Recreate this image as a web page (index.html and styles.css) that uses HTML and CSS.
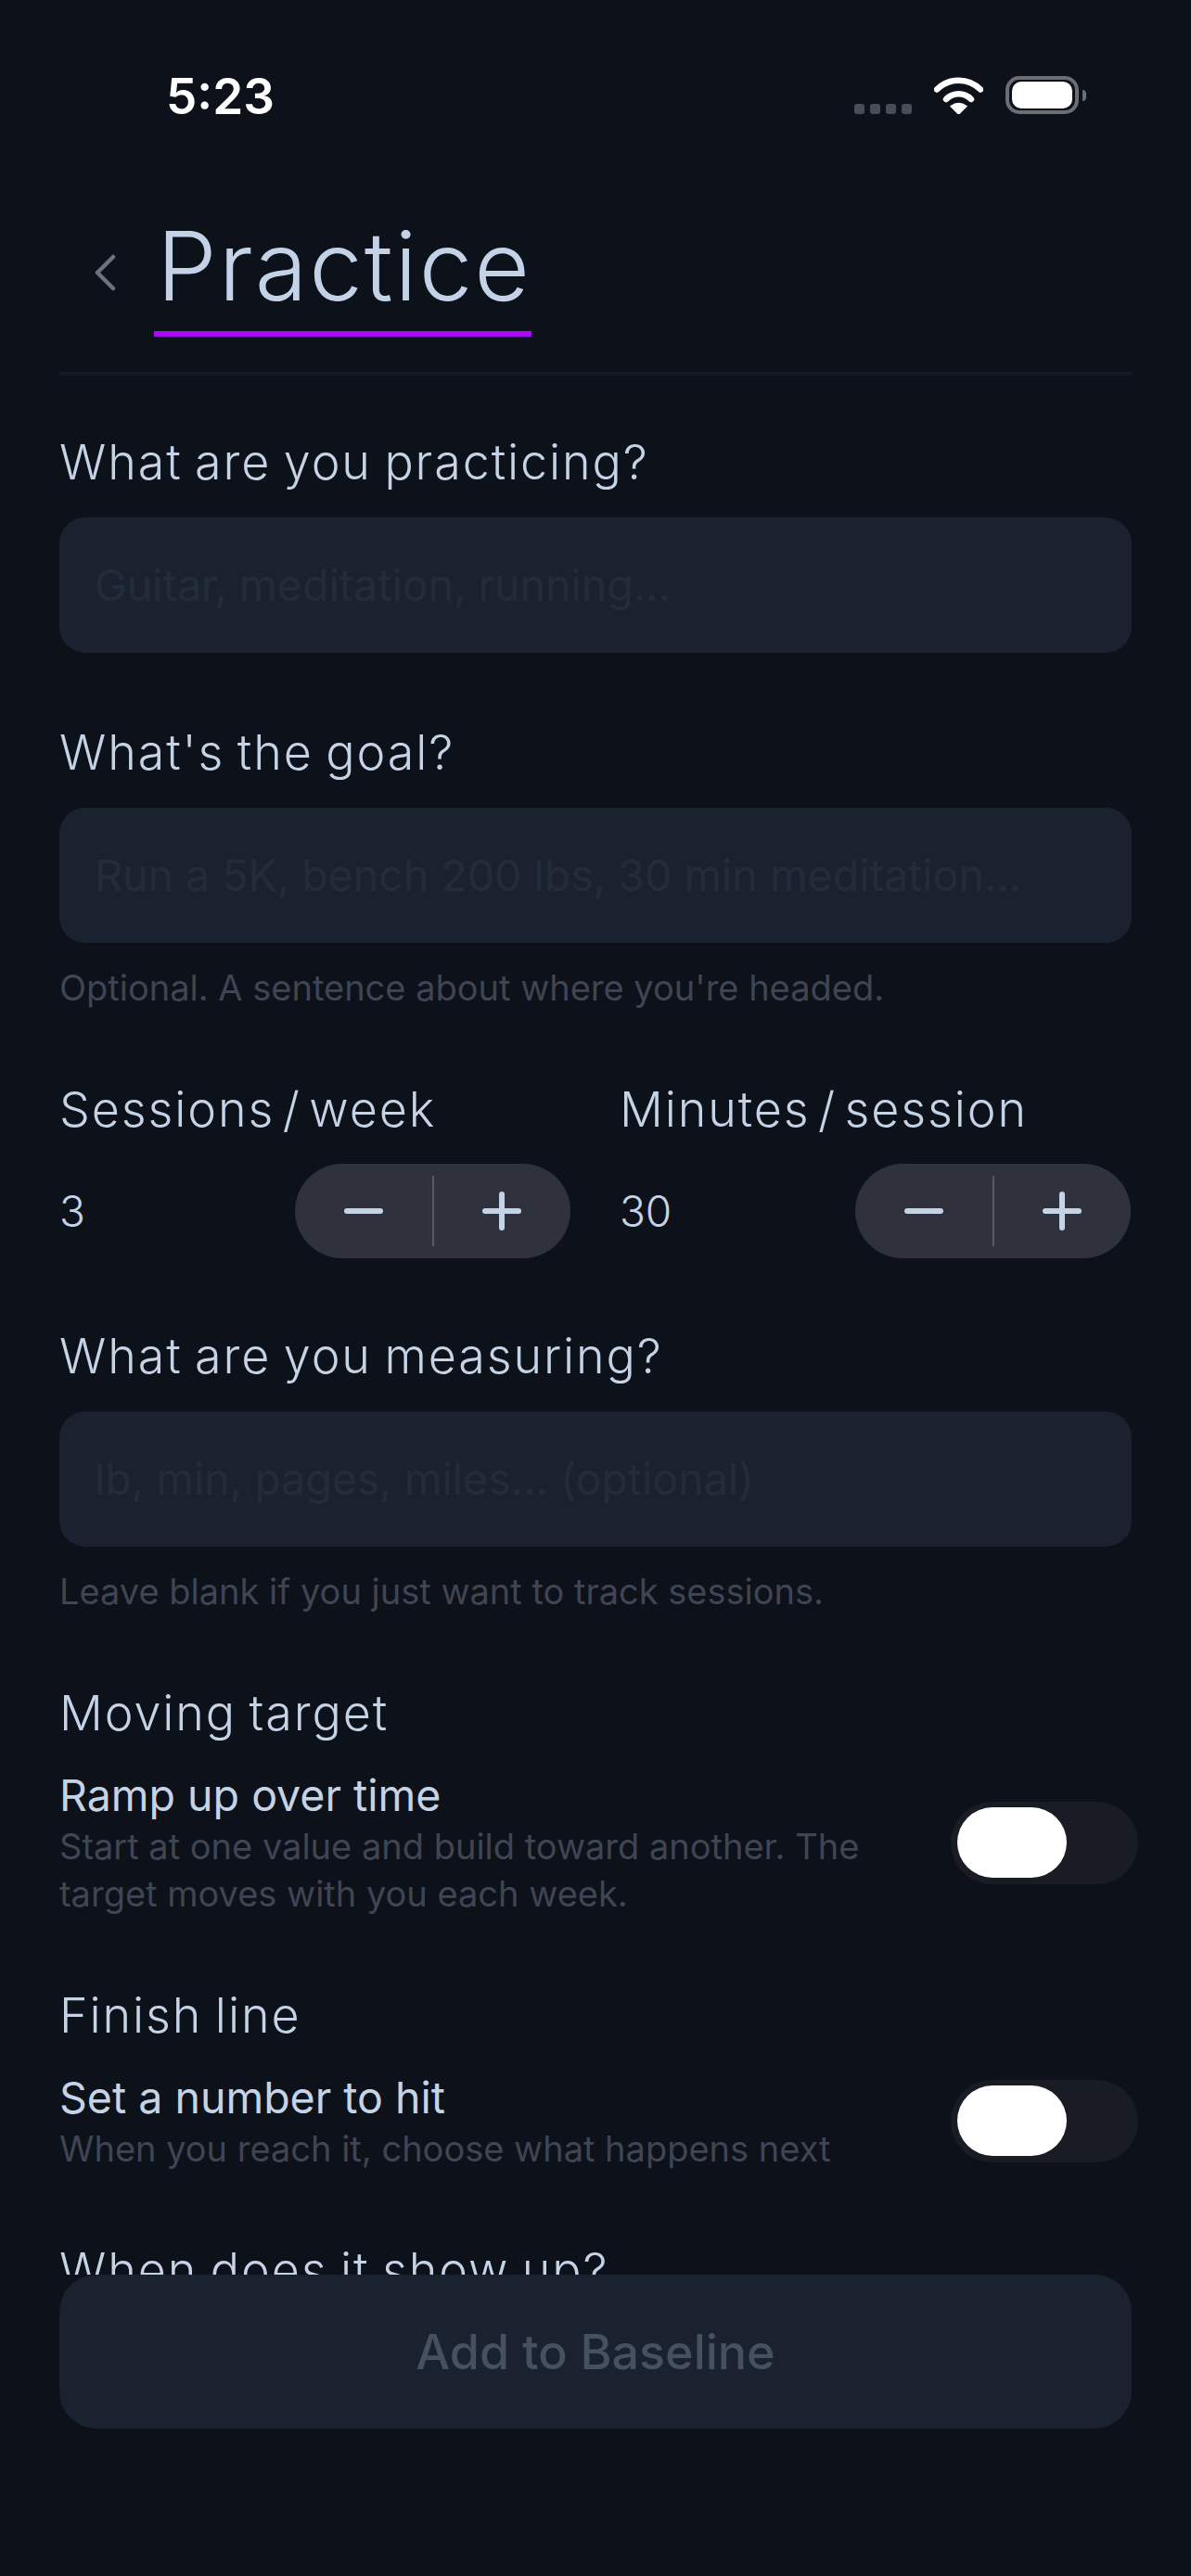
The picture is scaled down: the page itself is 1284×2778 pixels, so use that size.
FILE: index.html

```html
<!DOCTYPE html>
<html>
<head>
  <meta charset="UTF-8">
  <title>Practice</title>
  <meta name="viewport" content="width=device-width,initial-scale=1.0">
  <link rel="stylesheet" href="styles.css">
</head>
<body>
  <div class="screen">
    <div class="status">
      <div class="time">5:23</div>
      <div class="status-icons">
        <div class="dots"><i></i><i></i><i></i><i></i></div>
        <svg class="wifi" width="53" height="40" viewBox="0 0 53 40">
          <path d="M3 13.5A33 33 0 0 1 50 13.5" fill="none" stroke="#fff" stroke-width="6.5" stroke-linecap="round"/>
          <path d="M13 24A19 19 0 0 1 40 24" fill="none" stroke="#fff" stroke-width="6.5" stroke-linecap="round"/>
          <path d="M26.5 40L18 31.5Q26.5 25.5 35 31.5Z" fill="#fff" stroke="#fff" stroke-width="1.5" stroke-linejoin="round"/>
        </svg>
        <div class="battery"><div class="battery-fill"></div></div>
        <div class="battery-nub"></div>
      </div>
    </div>

    <div class="head">
      <svg class="back" width="24" height="40" viewBox="0 0 24 40">
        <path d="M21 3L4 20L21 37" fill="none" stroke="#6b7380" stroke-width="4.5" stroke-linecap="round" stroke-linejoin="round"/>
      </svg>
      <h1 class="title">Practice</h1>
    </div>

    <div class="form">
      <div class="label">What are you practicing?</div>
      <div class="field"><span>Guitar, meditation, running...</span></div>

      <div class="label gap-lg">What's the goal?</div>
      <div class="field"><span>Run a 5K, bench 200 lbs, 30 min meditation...</span></div>
      <div class="hint">Optional. A sentence about where you're headed.</div>

      <div class="cols gap-lg">
        <div class="col">
          <div class="label slash">Sessions / week</div>
          <div class="stepper-row">
            <span class="value">3</span>
            <div class="stepper">
              <div class="step"><i class="minus"></i></div>
              <div class="step"><i class="minus"></i><i class="plus-v"></i></div>
            </div>
          </div>
        </div>
        <div class="col">
          <div class="label slash">Minutes / session</div>
          <div class="stepper-row">
            <span class="value">30</span>
            <div class="stepper">
              <div class="step"><i class="minus"></i></div>
              <div class="step"><i class="minus"></i><i class="plus-v"></i></div>
            </div>
          </div>
        </div>
      </div>

      <div class="label gap">What are you measuring?</div>
      <div class="field"><span>lb, min, pages, miles... (optional)</span></div>
      <div class="hint">Leave blank if you just want to track sessions.</div>

      <div class="label gap-lg">Moving target</div>
      <div class="toggle-row">
        <div class="toggle-text">
          <div class="toggle-title">Ramp up over time</div>
          <div class="toggle-desc">Start at one value and build toward another. The target moves with you each week.</div>
        </div>
        <div class="toggle"><div class="thumb"></div></div>
      </div>

      <div class="label gap">Finish line</div>
      <div class="toggle-row">
        <div class="toggle-text">
          <div class="toggle-title">Set a number to hit</div>
          <div class="toggle-desc">When you reach it, choose what happens next</div>
        </div>
        <div class="toggle"><div class="thumb"></div></div>
      </div>

      <div class="label gap">When does it show up?</div>
    </div>

    <div class="footer">
      <div class="cta">Add to Baseline</div>
    </div>
  </div>
</body>
</html>
```

FILE: styles.css

```css
body{margin:0;background:#0c111a;color:#c5d3e6;font-family:Inter,"Liberation Sans",sans-serif;}

.screen{position:relative;width:1284px;height:2778px;overflow:hidden;background:#0c111a;}

/* status bar */
.status{display:flex;justify-content:space-between;padding:73px 113px 0 179px;height:59px;}
.time{font-size:53px;font-weight:600;line-height:62px;color:#fff;}
.status-icons{display:flex;align-items:flex-end;height:50px;}
.dots{display:flex;gap:6px;margin-right:24px;}
.dots i{width:11px;height:11px;border-radius:3px;background:#4a4d57;}
.wifi{margin-right:24px;}
.battery{width:65px;height:29px;padding:2px 3px;border:4px solid #6b6e75;border-radius:15px;}
.battery-fill{height:100%;background:#fff;border-radius:10px;}
.battery-nub{width:4px;height:12px;margin:0 0 14px 4px;background:#6b6e75;border-radius:0 6px 6px 0;}

/* header */
.head{display:flex;align-items:flex-start;margin:0 64px;padding-top:92px;height:177px;border-bottom:4px solid #151b26;}
.back{margin:50px 41px 0 37px;flex:none;}
.title{margin:0;padding-left:3px;font-size:103px;font-weight:300;letter-spacing:2px;line-height:125px;height:133px;border-bottom:6px solid #aa08f8;color:#c3d2e6;}

/* form */
.form{padding:0 64px;}
.label{font-size:52px;font-weight:300;letter-spacing:1.9px;word-spacing:-3px;line-height:60px;color:#c5d3e6;}
.label.slash{word-spacing:-8px;}
.form>.label:first-child{margin-top:64px;}
.gap{margin-top:76px;}
.gap-lg{margin-top:78px;}

.field{display:flex;align-items:center;height:146px;margin-top:29px;padding:0 38px;background:#1a2230;border-radius:28px;font-size:46.5px;color:#242c39;}
.hint{margin-top:24px;font-size:38px;line-height:48px;color:#3f4552;}

/* steppers */
.cols{display:flex;gap:53px;margin-right:1px;}
.col{flex:1;}
.stepper-row{display:flex;align-items:center;justify-content:space-between;margin-top:28px;}
.value{font-size:46px;font-weight:300;color:#c5d3e6;}
.stepper{display:flex;position:relative;width:297px;height:102px;border-radius:51px;background:#2f323d;}
.stepper::after{content:"";position:absolute;left:148px;top:13px;width:2px;height:76px;background:#555963;}
.step{flex:1;position:relative;display:flex;align-items:center;justify-content:center;}
.minus{width:42px;height:6px;border-radius:3px;background:#c5d3e6;}
.plus-v{position:absolute;left:50%;top:50%;width:6px;height:42px;margin:-21px 0 0 -3px;border-radius:3px;background:#c5d3e6;}

/* toggles */
.toggle-row{display:flex;align-items:center;justify-content:space-between;margin-top:28px;}
.toggle-text{width:900px;}
.toggle-title{font-size:46.5px;line-height:60px;color:#c5d3e6;}
.toggle-desc{font-size:38px;line-height:51px;color:#3f4552;}
.toggle{flex:none;width:202px;height:89px;margin-right:-7px;padding:6px 7px;box-sizing:border-box;border-radius:45px;background:#1a1c25;}
.thumb{width:118px;height:76px;border-radius:38px;background:#fff;}

/* bottom button */
.footer{position:absolute;left:0;right:0;top:2453px;bottom:0;padding:0 64px;background:#0c111a;}
.cta{display:flex;align-items:center;justify-content:center;height:166px;border-radius:40px;background:#1a2230;font-size:52px;font-weight:500;color:#465060;}
```
